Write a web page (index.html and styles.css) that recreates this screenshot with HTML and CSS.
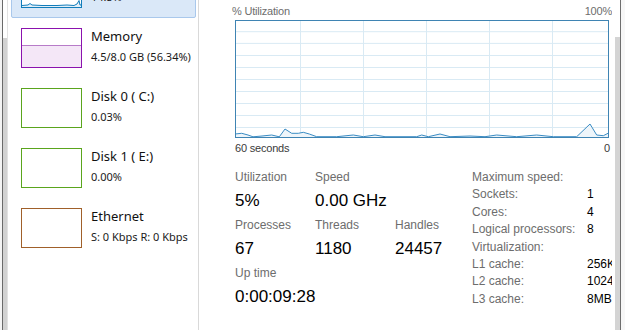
FILE: index.html
```html
<!DOCTYPE html>
<html>
<head>
<meta charset="utf-8">
<link rel="stylesheet" href="styles.css">
</head>
<body>
<div class="window">
  <div class="lstrip"><div class="lwhite"></div><div class="ldark"></div><div class="lgray"></div><div class="lline"></div></div>
  <div class="sidebar">
    <div class="list">
      <div class="item selected">
        <div class="thumb cpu">
          <svg width="59" height="38" viewBox="0 0 59 38">
            <polygon points="0,36.5 6,36 8,34.5 10,36 20,36.5 35,36.5 45,36 52,36.5 55,35 57,31.5 58,36 59,36 59,38 0,38" fill="#e3eff8"/>
            <polyline points="0,36.5 6,36 8,34.5 10,36 20,36.5 35,36.5 45,36 52,36.5 55,35 57,31.5 58,36 59,36" fill="none" stroke="#117dbb" stroke-width="1"/>
          </svg>
        </div>
        <div class="info"><div class="title">CPU</div><div class="sub">14.5%</div></div>
      </div>
      <div class="item">
        <div class="thumb mem">
          <svg width="59" height="38" viewBox="0 0 59 38">
            <rect x="0" y="16.5" width="59" height="21.5" fill="#f4e7f7"/>
            <polyline points="0,16.5 59,16.5" fill="none" stroke="#b77bc8" stroke-width="1"/>
          </svg>
        </div>
        <div class="info"><div class="title">Memory</div><div class="sub">4.5/8.0 GB (56.34%)</div></div>
      </div>
      <div class="item">
        <div class="thumb disk"></div>
        <div class="info"><div class="title">Disk 0 ( C:)</div><div class="sub">0.03%</div></div>
      </div>
      <div class="item">
        <div class="thumb disk"></div>
        <div class="info"><div class="title">Disk 1 ( E:)</div><div class="sub">0.00%</div></div>
      </div>
      <div class="item">
        <div class="thumb eth"></div>
        <div class="info"><div class="title">Ethernet</div><div class="sub">S: 0 Kbps R: 0 Kbps</div></div>
      </div>
    </div>
  </div>
  <div class="divider"></div>
  <div class="main">
    <div class="chart-head"><span>% Utilization</span><span>100%</span></div>
    <svg class="chart" width="374" height="118" viewBox="0 0 374 118">
      <g stroke="#d9eaf4" stroke-width="1">
        <line x1="0" y1="11.7" x2="374" y2="11.7"/>
        <line x1="0" y1="23.4" x2="374" y2="23.4"/>
        <line x1="0" y1="35.5" x2="374" y2="35.5"/>
        <line x1="0" y1="47.5" x2="374" y2="47.5"/>
        <line x1="0" y1="59.5" x2="374" y2="59.5"/>
        <line x1="0" y1="71.5" x2="374" y2="71.5"/>
        <line x1="0" y1="83.5" x2="374" y2="83.5"/>
        <line x1="0" y1="95.5" x2="374" y2="95.5"/>
        <line x1="0" y1="107.5" x2="374" y2="107.5"/>
        <line x1="65.5" y1="0" x2="65.5" y2="118"/>
        <line x1="128.5" y1="0" x2="128.5" y2="118"/>
        <line x1="191.5" y1="0" x2="191.5" y2="118"/>
        <line x1="254.5" y1="0" x2="254.5" y2="118"/>
        <line x1="317.5" y1="0" x2="317.5" y2="118"/>
      </g>
      <polygon fill="#eef5fa" points="0,114 6.7,113.3 13,115 18,116.8 27,116 36.7,115 44.3,116.8 50,109 56.7,113.3 63.3,113.3 68.3,112.3 74.3,114 81.7,116.7 101.7,116.7 118.3,115 128.3,116.7 140,115 150,116.7 181.7,116.7 186.7,115 193.3,116.7 205,114 215,116.7 235,116 250,116.7 261.7,115 281.7,116.7 301.7,115 318.3,116.7 341.7,116.7 355,104 361.7,115 368.3,115.7 373,113.3 373,117 0,117"/>
      <polyline fill="none" stroke="#3a8cc4" stroke-width="1" points="0,114 6.7,113.3 13,115 18,116.8 27,116 36.7,115 44.3,116.8 50,109 56.7,113.3 63.3,113.3 68.3,112.3 74.3,114 81.7,116.7 101.7,116.7 118.3,115 128.3,116.7 140,115 150,116.7 181.7,116.7 186.7,115 193.3,116.7 205,114 215,116.7 235,116 250,116.7 261.7,115 281.7,116.7 301.7,115 318.3,116.7 341.7,116.7 355,104 361.7,115 368.3,115.7 373,113.3"/>
      <rect x="0.5" y="0.5" width="373" height="117" fill="none" stroke="#3f84b3" stroke-width="1"/>
    </svg>
    <div class="chart-foot"><span>60 seconds</span><span>0</span></div>
    <div class="stats">
      <div class="grid">
        <div class="cell"><div class="lbl">Utilization</div><div class="val">5%</div></div>
        <div class="cell"><div class="lbl">Speed</div><div class="val">0.00 GHz</div></div>
        <div class="cell"></div>
        <div class="cell"><div class="lbl">Processes</div><div class="val">67</div></div>
        <div class="cell"><div class="lbl">Threads</div><div class="val">1180</div></div>
        <div class="cell"><div class="lbl">Handles</div><div class="val">24457</div></div>
        <div class="cell wide"><div class="lbl">Up time</div><div class="val">0:00:09:28</div></div>
      </div>
      <div class="specs">
        <div class="k">Maximum speed:</div><div class="v"></div>
        <div class="k">Sockets:</div><div class="v">1</div>
        <div class="k">Cores:</div><div class="v">4</div>
        <div class="k">Logical processors:</div><div class="v">8</div>
        <div class="k">Virtualization:</div><div class="v"></div>
        <div class="k">L1 cache:</div><div class="v">256KB</div>
        <div class="k">L2 cache:</div><div class="v">1024KB</div>
        <div class="k">L3 cache:</div><div class="v">8MB</div>
      </div>
    </div>
  </div>
  <div class="rstrip"><div class="rwhite"></div><div class="rgray"></div><div class="rdark"></div><div class="rend"></div></div>
</div>
</body>
</html>
```

FILE: styles.css
```css
html, body {
  margin: 0;
  padding: 0;
  background: #ffffff;
}
body {
  width: 625px;
  height: 330px;
  overflow: hidden;
}
.window {
  display: flex;
  width: 625px;
  height: 330px;
  overflow: hidden;
  background: #ffffff;
}
.lstrip {
  display: flex;
  width: 8px;
  flex: none;
}
.lwhite { width: 2px; background: #f4f4f4; }
.ldark { width: 1px; background: #6a6a6a; }
.lgray {
  width: 4px;
  background: linear-gradient(#ffffff 0, #ffffff 38px, #d2d2d2 38px);
}
.lline { width: 1px; background: #e2e2e2; }

.sidebar {
  width: 190px;
  flex: none;
  overflow: hidden;
}
.list {
  margin-top: -42px;
  display: flex;
  flex-direction: column;
}
.item {
  margin-left: 3px;
  width: 183px;
  height: 58px;
  border: 1px solid transparent;
  border-radius: 2px;
  display: flex;
  align-items: flex-start;
}
.item.selected {
  background: #dae8f8;
  border-color: #a9c8ec;
}
.thumb {
  margin: 9px 0 0 9px;
  width: 59px;
  height: 38px;
  border: 1px solid #4da60c;
  background: #ffffff;
  flex: none;
}
.thumb svg { display: block; }
.thumb.cpu { border-color: #117dbb; }
.thumb.mem { border-color: #8b12ae; }
.thumb.disk { border-color: #5aa51d; }
.thumb.eth { border-color: #a0602a; }
.info {
  margin: 9px 0 0 9px;
  font-family: "Noto Sans", "Open Sans", sans-serif;
  white-space: nowrap;
}
.title {
  font-size: 13px;
  line-height: 17px;
  color: #111;
}
.sub {
  margin-top: 5px;
  font-size: 11px;
  line-height: 14px;
  color: #1a1a1a;
}

.divider {
  width: 1px;
  flex: none;
  background: #d9d9d9;
}

.main {
  width: 377px;
  flex: none;
  padding: 4px 0 0 36px;
  overflow: hidden;
  font-family: "Liberation Sans", Arial, sans-serif;
}
.chart-head {
  margin-left: -3px;
  width: 380px;
  display: flex;
  justify-content: space-between;
  font-size: 11px;
  line-height: 14px;
  color: #6d6d6d;
  letter-spacing: -0.2px;
}
.chart {
  display: block;
  margin-top: 2px;
}
.chart-foot {
  margin-top: 3px;
  width: 375px;
  display: flex;
  justify-content: space-between;
  font-size: 11px;
  line-height: 14px;
  color: #3a3a3a;
  letter-spacing: -0.2px;
}
.stats {
  margin-top: 15px;
  display: flex;
  white-space: nowrap;
}
.grid {
  width: 237px;
  flex: none;
  display: grid;
  grid-template-columns: 80px 80px 77px;
  row-gap: 6px;
}
.cell.wide { grid-column: 1 / 3; }
.lbl {
  font-size: 12px;
  line-height: 15px;
  color: #6d6d6d;
}
.val {
  margin-top: 5px;
  font-size: 17px;
  line-height: 22px;
  color: #000;
}
.specs {
  margin-top: -1px;
  display: grid;
  grid-template-columns: 115px 60px;
  font-size: 12px;
  line-height: 16.86px;
}
.specs .k { color: #6d6d6d; }
.specs .v { color: #000; }

.rstrip {
  display: flex;
  width: 13px;
  flex: none;
}
.rwhite { width: 3px; background: #ffffff; }
.rgray {
  width: 5px;
  background: linear-gradient(#ffffff 0, #ffffff 37px, #d4d4d4 37px);
}
.rdark { width: 1px; background: #6e6e6e; }
.rend { width: 4px; background: #f7f7f7; }
```
